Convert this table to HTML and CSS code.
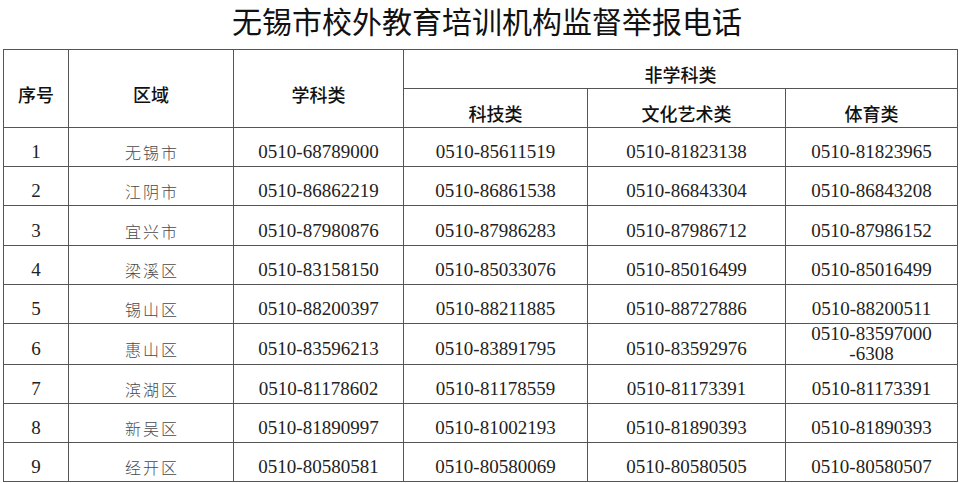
FILE: index.html
```html
<!DOCTYPE html>
<html lang="zh-CN">
<head>
<meta charset="utf-8">
<title>无锡市校外教育培训机构监督举报电话</title>
<link rel="stylesheet" href="styles.css">
</head>
<body>
<h1 class="title">无锡市校外教育培训机构监督举报电话</h1>
<table class="grid">
  <colgroup>
    <col class="c-no"><col class="c-area"><col class="c-sub"><col class="c-sci"><col class="c-art"><col class="c-pe">
  </colgroup>
  <thead>
    <tr class="hrow">
      <th rowspan="2" class="hmain">序号</th>
      <th rowspan="2" class="hmain">区域</th>
      <th rowspan="2" class="hmain">学科类</th>
      <th colspan="3">非学科类</th>
    </tr>
    <tr class="hrow">
      <th>科技类</th>
      <th>文化艺术类</th>
      <th>体育类</th>
    </tr>
  </thead>
  <tbody>
    <tr><td>1</td><td class="area">无锡市</td><td>0510-68789000</td><td>0510-85611519</td><td>0510-81823138</td><td>0510-81823965</td></tr>
    <tr><td>2</td><td class="area">江阴市</td><td>0510-86862219</td><td>0510-86861538</td><td>0510-86843304</td><td>0510-86843208</td></tr>
    <tr class="tall"><td>3</td><td class="area">宜兴市</td><td>0510-87980876</td><td>0510-87986283</td><td>0510-87986712</td><td>0510-87986152</td></tr>
    <tr><td>4</td><td class="area">梁溪区</td><td>0510-83158150</td><td>0510-85033076</td><td>0510-85016499</td><td>0510-85016499</td></tr>
    <tr><td>5</td><td class="area">锡山区</td><td>0510-88200397</td><td>0510-88211885</td><td>0510-88727886</td><td>0510-88200511</td></tr>
    <tr class="tall"><td>6</td><td class="area">惠山区</td><td>0510-83596213</td><td>0510-83891795</td><td>0510-83592976</td><td class="multi">0510-83597000<br>-6308</td></tr>
    <tr><td>7</td><td class="area">滨湖区</td><td>0510-81178602</td><td>0510-81178559</td><td>0510-81173391</td><td>0510-81173391</td></tr>
    <tr><td>8</td><td class="area">新吴区</td><td>0510-81890997</td><td>0510-81002193</td><td>0510-81890393</td><td>0510-81890393</td></tr>
    <tr><td>9</td><td class="area">经开区</td><td>0510-80580581</td><td>0510-80580069</td><td>0510-80580505</td><td>0510-80580507</td></tr>
  </tbody>
</table>
</body>
</html>
```

FILE: styles.css
```css
html, body {
  margin: 0;
  padding: 0;
  background: #ffffff;
}

.title {
  margin: 0;
  height: 49px;
  padding: 0 0 0 14px;
  box-sizing: border-box;
  font-family: "Noto Sans CJK SC", "Noto Sans", sans-serif;
  font-weight: 400;
  font-size: 30px;
  line-height: 40px;
  text-align: center;
  color: #111111;
}

.grid {
  margin-left: 3px;
  width: 954px;
  border-collapse: collapse;
  table-layout: fixed;
  border: 1px solid #555555;
}

.c-no { width: 65px; }
.c-area { width: 165px; }
.c-sub { width: 170px; }
.c-sci { width: 184px; }
.c-art { width: 198px; }
.c-pe { width: 172px; }

.grid th,
.grid td {
  border: 1px solid #555555;
  text-align: center;
  vertical-align: middle;
  padding: 10px 0 0 0;
  box-sizing: border-box;
}

.grid th {
  height: 39px;
  font-family: "Noto Sans CJK SC", "Noto Sans", sans-serif;
  font-weight: 500;
  font-size: 18px;
  line-height: 22px;
  color: #111111;
}

.grid td {
  height: 39px;
  font-family: "Liberation Serif", "Noto Sans CJK SC", serif;
  font-size: 19px;
  line-height: 22px;
  color: #222222;
}

.grid tr.tall td {
  height: 40px;
}

.grid td.area {
  font-family: "Noto Sans CJK SC", sans-serif;
  font-weight: 300;
  font-size: 16px;
  letter-spacing: 2px;
  padding-left: 2px;
  color: #4a4a4a;
}

.grid td.multi {
  padding-top: 0;
  line-height: 20px;
}
```
